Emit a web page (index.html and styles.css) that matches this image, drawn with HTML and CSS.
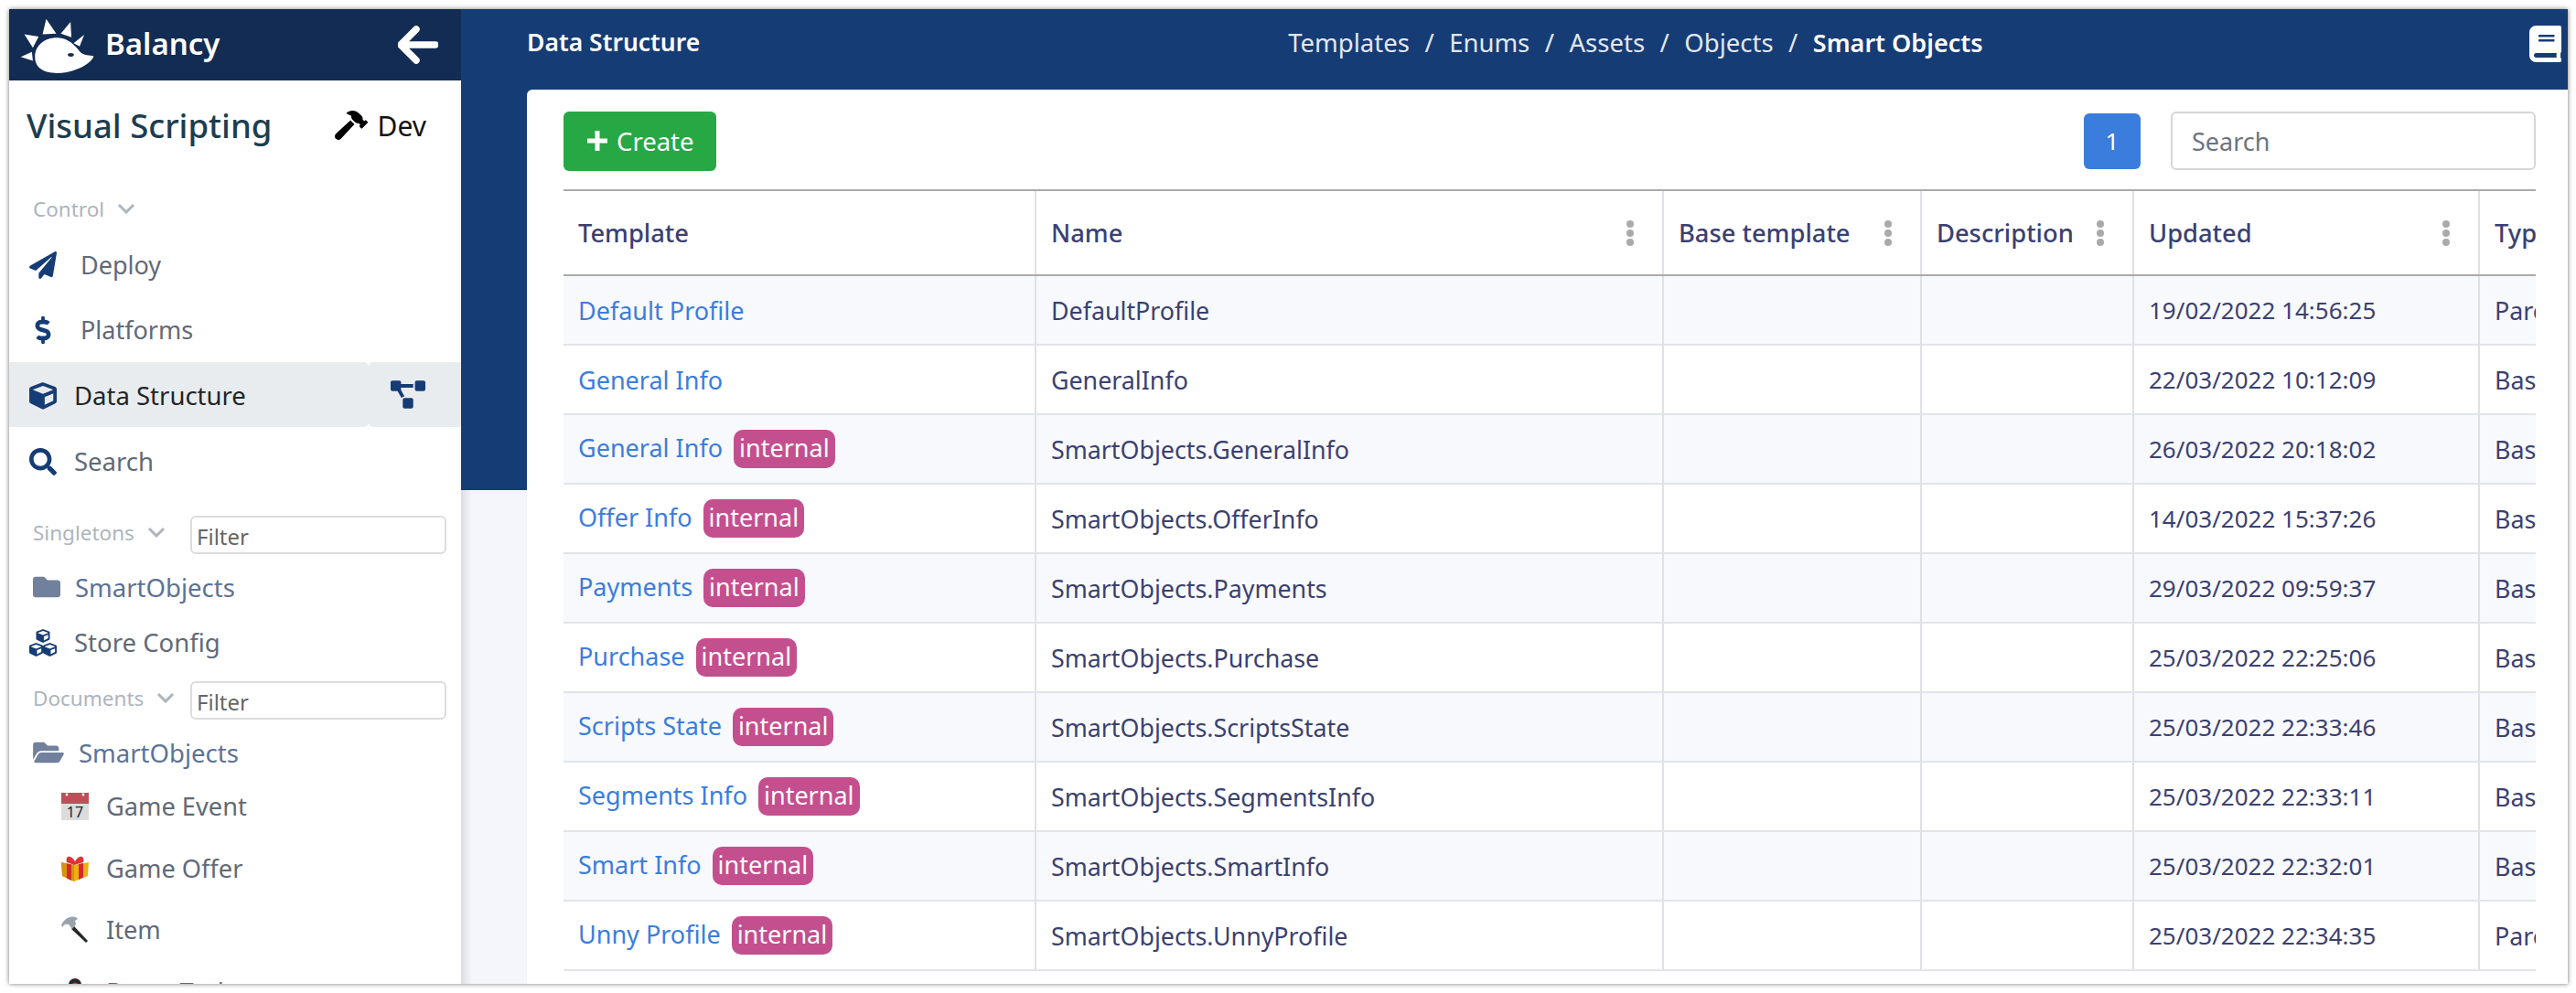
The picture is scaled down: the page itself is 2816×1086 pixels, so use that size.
FILE: index.html
```html
<!DOCTYPE html>
<html lang="en">
<head>
<meta charset="utf-8">
<title>Balancy - Smart Objects</title>
<link rel="stylesheet" href="styles.css">
</head>
<body>
<div class="window">
  <aside class="sidebar">
    <div class="brand">
      <svg class="logo" viewBox="0 0 280 210"><path fill="#fff" d="M110 70L122 20L155 68ZM170 68L202 30L205 80ZM212 100L247 72L232 110ZM50 70L97 78L78 115ZM38 145L75 128L78 158ZM85 145C85 105 120 80 160 82C195 84 215 105 235 130C245 140 265 140 278 142C275 160 240 185 190 195C130 205 85 190 85 145Z"/><ellipse cx="203" cy="138" rx="10" ry="6" fill="#132c54"/></svg>
      <span class="brand-name">Balancy</span>
      <svg class="back" viewBox="0 0 44 42"><path d="M20 4L3 21L20 38M4 21H41" fill="none" stroke="#fff" stroke-width="7.5" stroke-linecap="round" stroke-linejoin="round"/></svg>
    </div>
    <div class="title-row">
      <span class="title">Visual Scripting</span>
      <svg class="hammer" viewBox="0 0 576 512"><path d="M571.31 193.94l-22.63-22.63c-6.25-6.25-16.38-6.25-22.63 0l-11.31 11.31-28.9-28.9c5.63-21.31.36-44.9-16.35-61.61l-45.25-45.25c-62.48-62.48-163.79-62.48-226.28 0l90.51 45.25v18.75c0 16.97 6.74 33.25 18.75 45.25l49.14 49.14c16.71 16.71 40.3 21.98 61.61 16.35l28.9 28.9-11.31 11.31c-6.25 6.25-6.25 16.38 0 22.63l22.63 22.63c6.25 6.25 16.38 6.25 22.63 0l90.51-90.51c6.23-6.24 6.23-16.37-.02-22.62zm-286.72-15.2c-3.7-3.7-6.84-7.79-9.85-11.95L19.64 404.96c-25.57 23.88-26.26 64.19-1.53 88.93s65.05 24.05 88.93-1.53l238.13-255.07c-3.96-2.91-7.9-5.87-11.44-9.41l-49.14-49.14z"/></svg>
      <span class="env">Dev</span>
    </div>
    <div class="label label-control">Control <svg class="chev" viewBox="0 0 20 12"><path d="M2 2L10 10L18 2"/></svg></div>
    <div class="nav wide"><svg class="ic" viewBox="0 0 512 512"><path d="M476 3.2L12.5 270.6c-18.1 10.4-15.8 35.6 2.2 43.2L121 358.4l287.3-253.2c5.5-4.9 13.3 2.6 8.6 8.3L176 407v80.5c0 23.6 28.5 32.9 42.5 15.8L282 426l124.6 52.2c14.2 6 30.4-2.9 33-18.2l72-432C515 7.8 493.3-6.8 476 3.2z"/></svg><span>Deploy</span></div>
    <div class="nav wide"><svg class="ic" viewBox="-112 0 512 512"><path d="M209.2 233.4l-108-31.6C88.7 198.2 80 186.5 80 173.5c0-16.3 13.2-29.5 29.5-29.5h66.3c12.2 0 24.2 3.7 34.2 10.5 6.1 4.1 14.3 3.1 19.5-2l34.8-34c7.1-6.9 6.1-18.4-1.8-24.5C238 74.8 207.4 64.1 176 64V16c0-8.8-7.2-16-16-16h-32c-8.8 0-16 7.2-16 16v48h-2.5C45.8 64-5.4 118.7.5 183.6c4.2 46.1 39.4 83.6 83.8 96.6l102.5 30c12.5 3.7 21.2 15.3 21.2 28.3 0 16.3-13.2 29.5-29.5 29.5h-66.3C100 368 88 364.3 78 357.5c-6.1-4.1-14.3-3.1-19.5 2l-34.8 34c-7.1 6.9-6.1 18.4 1.8 24.5 24.5 19.2 55.1 29.9 86.5 30v48c0 8.8 7.2 16 16 16h32c8.8 0 16-7.2 16-16v-48.2c46.6-.9 90.3-28.6 105.7-72.7 21.5-61.6-14.6-124.8-72.5-141.7z"/></svg><span>Platforms</span></div>
    <div class="active-row">
      <div class="nav active"><svg class="ic" viewBox="0 0 512 512"><path d="M239.1 6.3l-208 78c-18.7 7-31.1 25-31.1 45v225.1c0 18.2 10.3 34.8 26.5 42.9l208 104c13.5 6.8 29.4 6.8 42.9 0l208-104c16.3-8.1 26.5-24.8 26.5-42.9V129.3c0-20-12.4-37.9-31.1-44.9l-208-78C262 2.2 250 2.2 239.1 6.3zM256 68.4l192 72v1.1l-192 78-192-78v-1.1l192-72zm32 356V275.5l160-65v133.9l-160 80z"/></svg><span>Data Structure</span></div>
      <div class="tree-btn"><svg class="tree" viewBox="0 0 640 512"><path d="M384 320H256c-17.67 0-32 14.33-32 32v128c0 17.67 14.33 32 32 32h128c17.67 0 32-14.33 32-32V352c0-17.67-14.33-32-32-32zM192 32c0-17.67-14.33-32-32-32H32C14.33 0 0 14.33 0 32v128c0 17.67 14.33 32 32 32h95.72l73.16 128.04C211.98 300.98 232.4 288 256 288h.28L192 175.51V128h224V64H192V32zM608 0H480c-17.67 0-32 14.33-32 32v128c0 17.67 14.33 32 32 32h128c17.67 0 32-14.33 32-32V32c0-17.67-14.33-32-32-32z"/></svg></div>
    </div>
    <div class="nav"><svg class="ic" viewBox="0 0 512 512"><path d="M505 442.7L405.3 343c-4.5-4.5-10.6-7-17-7H372c27.6-35.3 44-79.7 44-128C416 93.1 322.9 0 208 0S0 93.1 0 208s93.1 208 208 208c48.3 0 92.7-16.4 128-44v16.3c0 6.4 2.5 12.5 7 17l99.7 99.7c9.4 9.4 24.6 9.4 33.9 0l28.3-28.3c9.4-9.4 9.4-24.6.1-34zM208 336c-70.7 0-128-57.2-128-128 0-70.7 57.2-128 128-128 70.7 0 128 57.2 128 128 0 70.7-57.2 128-128 128z"/></svg><span>Search</span></div>
    <div class="filter-row singletons">
      <div class="label">Singletons <svg class="chev" viewBox="0 0 20 12"><path d="M2 2L10 10L18 2"/></svg></div>
      <input class="filter" placeholder="Filter">
    </div>
    <div class="nav folder"><svg class="ic-folder" viewBox="0 0 512 512"><path d="M464 128H272l-64-64H48C21.49 64 0 85.49 0 112v288c0 26.51 21.49 48 48 48h416c26.51 0 48-21.49 48-48V176c0-26.51-21.49-48-48-48z"/></svg><span>SmartObjects</span></div>
    <div class="nav store"><svg class="ic" viewBox="0 0 512 512"><g transform="translate(128 0) scale(.5)"><use href="#cube"/></g><g transform="translate(0 256) scale(.5)"><use href="#cube"/></g><g transform="translate(256 256) scale(.5)"><use href="#cube"/></g><defs><path id="cube" d="M239.1 6.3l-208 78c-18.7 7-31.1 25-31.1 45v225.1c0 18.2 10.3 34.8 26.5 42.9l208 104c13.5 6.8 29.4 6.8 42.9 0l208-104c16.3-8.1 26.5-24.8 26.5-42.9V129.3c0-20-12.4-37.9-31.1-44.9l-208-78C262 2.2 250 2.2 239.1 6.3zM256 68.4l192 72v1.1l-192 78-192-78v-1.1l192-72zm32 356V275.5l160-65v133.9l-160 80z"/></defs></svg><span>Store Config</span></div>
    <div class="filter-row documents">
      <div class="label">Documents <svg class="chev" viewBox="0 0 20 12"><path d="M2 2L10 10L18 2"/></svg></div>
      <input class="filter" placeholder="Filter">
    </div>
    <div class="nav folder open"><svg class="ic-open" viewBox="0 0 576 512"><path d="M572.694 292.093L500.27 416.248A63.997 63.997 0 0 1 444.989 448H45.025c-18.523 0-30.064-20.093-20.731-36.093l72.424-124.155A64 64 0 0 1 152 256h399.964c18.523 0 30.064 20.093 20.73 36.093zM152 224h328v-48c0-26.51-21.49-48-48-48H272l-64-64H48C21.49 64 0 85.49 0 112v278.046l69.077-118.418C86.214 242.25 117.989 224 152 224z"/></svg><span>SmartObjects</span></div>
    <div class="doc first">
      <svg class="emoji" viewBox="0 0 30 30"><rect y="0" width="30" height="30" fill="#dcdcdc"/><rect width="30" height="12" fill="#bb5058"/><circle cx="6" cy="2" r="1.4" fill="#fff"/><circle cx="24" cy="2" r="1.4" fill="#fff"/><text x="15" y="27" text-anchor="middle" class="emoji-num">17</text></svg>
      <span>Game Event</span>
    </div>
    <div class="doc">
      <svg class="emoji" viewBox="0 0 30 30"><path d="M0 9L14 12L30 9L29 24L14 30L1 24Z" fill="#eeaf12"/><path d="M0 9L14 12V30L1 24Z" fill="#d9930d"/><path d="M6 10.5L11 11.5V29L6 26.5ZM19 11L24 10V25.5L19 28Z" fill="#d3292c"/><path d="M15 8C10 0 4 2 6 9L14 12L24 9C26 2 20 0 15 8Z" fill="#e0343a"/></svg>
      <span>Game Offer</span>
    </div>
    <div class="doc">
      <svg class="emoji" viewBox="0 0 30 30"><path d="M14 11L29 27L27 29L11 14Z" fill="#24282c"/><path d="M0 10C3 3 9 -1 16 1L18 3L15 5L16 9L12 14L8 9C5 8 3 9 1 12Z" fill="#9aa3ab"/></svg>
      <span>Item</span>
    </div>
    <div class="doc">
      <svg class="emoji" viewBox="0 0 30 30"><circle cx="15" cy="8" r="7" fill="#26282c"/><circle cx="15" cy="9" r="3.5" fill="#e0343a"/></svg>
      <span>Boost Tasks</span>
    </div>
  </aside>
  <main class="main">
    <header class="topbar">
      <span class="page-title">Data Structure</span>
      <nav class="crumbs">
        <a>Templates</a><i>/</i><a>Enums</a><i>/</i><a>Assets</a><i>/</i><a>Objects</a><i>/</i><b>Smart Objects</b>
      </nav>
      <svg class="book" viewBox="0 0 448 512"><path fill="#fff" d="M448 360V24c0-13.3-10.7-24-24-24H96C43 0 0 43 0 96v320c0 53 43 96 96 96h328c13.3 0 24-10.7 24-24v-16c0-7.5-3.5-14.3-8.9-18.7-4.2-15.4-4.2-59.3 0-74.7 5.4-4.3 8.9-11.1 8.9-18.6zM128 134c0-3.3 2.7-6 6-6h212c3.3 0 6 2.7 6 6v20c0 3.3-2.7 6-6 6H134c-3.3 0-6-2.7-6-6v-20zm0 64c0-3.3 2.7-6 6-6h212c3.3 0 6 2.7 6 6v20c0 3.3-2.7 6-6 6H134c-3.3 0-6-2.7-6-6v-20zm253.4 250H96c-17.7 0-32-14.3-32-32 0-17.6 14.4-32 32-32h285.4c-1.9 17.1-1.9 46.9 0 64z"/></svg>
    </header>
    <section class="card">
      <div class="toolbar">
        <button class="create"><svg class="plus" viewBox="0 0 26 26"><path d="M13 2V24M2 13H24"/></svg>Create</button>
        <span class="page-num">1</span>
        <input class="search" placeholder="Search">
      </div>
      <div class="table-wrap">
        <table>
          <colgroup><col class="c1"><col class="c2"><col class="c3"><col class="c4"><col class="c5"><col class="c6"></colgroup>
          <thead>
            <tr>
              <th>Template</th>
              <th><div class="th">Name<span class="kebab"><i></i><i></i><i></i></span></div></th>
              <th><div class="th">Base template<span class="kebab"><i></i><i></i><i></i></span></div></th>
              <th><div class="th">Description<span class="kebab"><i></i><i></i><i></i></span></div></th>
              <th><div class="th">Updated<span class="kebab"><i></i><i></i><i></i></span></div></th>
              <th>Type</th>
            </tr>
          </thead>
          <tbody>
            <tr><td><a>Default Profile</a></td><td>DefaultProfile</td><td></td><td></td><td class="date">19/02/2022 14:56:25</td><td>Parent</td></tr>
            <tr><td><a>General Info</a></td><td>GeneralInfo</td><td></td><td></td><td class="date">22/03/2022 10:12:09</td><td>Base</td></tr>
            <tr><td><a>General Info</a><span class="badge">internal</span></td><td>SmartObjects.GeneralInfo</td><td></td><td></td><td class="date">26/03/2022 20:18:02</td><td>Base</td></tr>
            <tr><td><a>Offer Info</a><span class="badge">internal</span></td><td>SmartObjects.OfferInfo</td><td></td><td></td><td class="date">14/03/2022 15:37:26</td><td>Base</td></tr>
            <tr><td><a>Payments</a><span class="badge">internal</span></td><td>SmartObjects.Payments</td><td></td><td></td><td class="date">29/03/2022 09:59:37</td><td>Base</td></tr>
            <tr><td><a>Purchase</a><span class="badge">internal</span></td><td>SmartObjects.Purchase</td><td></td><td></td><td class="date">25/03/2022 22:25:06</td><td>Base</td></tr>
            <tr><td><a>Scripts State</a><span class="badge">internal</span></td><td>SmartObjects.ScriptsState</td><td></td><td></td><td class="date">25/03/2022 22:33:46</td><td>Base</td></tr>
            <tr><td><a>Segments Info</a><span class="badge">internal</span></td><td>SmartObjects.SegmentsInfo</td><td></td><td></td><td class="date">25/03/2022 22:33:11</td><td>Base</td></tr>
            <tr><td><a>Smart Info</a><span class="badge">internal</span></td><td>SmartObjects.SmartInfo</td><td></td><td></td><td class="date">25/03/2022 22:32:01</td><td>Base</td></tr>
            <tr><td><a>Unny Profile</a><span class="badge">internal</span></td><td>SmartObjects.UnnyProfile</td><td></td><td></td><td class="date">25/03/2022 22:34:35</td><td>Parent</td></tr>
          </tbody>
        </table>
      </div>
    </section>
  </main>
</div>
</body>
</html>
```
FILE: styles.css
```css
* { box-sizing: border-box; }
html, body { margin: 0; height: 100%; background: #fff; overflow: hidden; }
body { padding: 10px 9px 10px 10px; font-family: "Noto Sans", sans-serif; font-size: 26.8px; color: #3a4170; }

.window { display: flex; width: 2797px; height: 1066px; overflow: hidden; box-shadow: 0 0 5px rgba(0,0,0,.55); }

.sidebar { flex: 0 0 494px; background: #fff; overflow: hidden; }
.brand { display: flex; align-items: center; height: 78px; background: #132c54; color: #fff; }
.logo { width: 93px; height: 70px; flex: none; margin-right: 12px; }
.brand-name { font-size: 33px; font-weight: 600; margin-top: -3px; }
.back { width: 44px; height: 42px; margin-left: auto; margin-right: 25px; }

.title-row { display: flex; align-items: center; height: 104px; padding: 0 38px 6px 19px; }
.title { font-size: 36.5px; font-weight: 500; color: #1c3d50; }
.hammer { width: 36px; height: 32px; margin-left: auto; margin-right: 11px; }
.env { font-size: 30px; color: #111; }

.label { font-size: 22.5px; color: #adb5bd; display: flex; align-items: center; white-space: nowrap; }
.label-control { height: 62px; padding: 10px 0 0 26px; }
.chev { width: 20px; height: 12px; margin-left: 14px; fill: none; stroke: #adb5bd; stroke-width: 3; }

.nav { display: flex; align-items: center; height: 71px; padding-left: 22px; font-size: 27.5px; color: #606a77; }
.nav span { margin-left: 19px; }
.nav.wide span { margin-left: 26px; }
.nav.wide { font-size: 27px; }
.ic { width: 30px; height: 30px; fill: #163c75; flex: none; }

.active-row { display: flex; height: 71px; margin-bottom: 2px; }
.nav.active { flex: 0 0 393px; height: 71px; padding-top: 2px; background: #e9ecef; border-radius: 0 5px 5px 0; color: #212529; }
.tree-btn { flex: 1; display: flex; align-items: center; justify-content: center; padding-right: 16px; background: #e9ecef; border-radius: 5px 0 0 5px; }
.tree { width: 38px; height: 31px; fill: #163c75; }

.filter-row { display: flex; align-items: center; justify-content: space-between; height: 42px; padding: 0 16px 0 26px; }
.filter-row .label { padding-bottom: 6px; }
.singletons { margin-top: 24px; }
.filter { width: 280px; height: 42px; padding: 3px 0 0 5px; border: 2px solid #dcdcdc; border-radius: 6px; font: 24px "Noto Sans", sans-serif; outline: none; }
.filter::placeholder { color: #666; opacity: 1; }

.folder { padding-left: 26px; color: #5c7295; height: 72px; }
.ic-folder { width: 30px; height: 30px; fill: #71819d; flex: none; }
.ic-open { width: 34px; height: 30px; fill: #71819d; flex: none; }
.folder span { margin-left: 16px; }
.store { height: 52px; padding-bottom: 3px; }
.documents { margin-top: 15px; }
.open { height: 72px; }

.doc { display: flex; align-items: center; height: 67.5px; padding-left: 57px; font-size: 27.2px; color: #606a77; }
.doc.first { margin-top: -11px; }
.doc span { margin-left: 19px; }
.emoji { width: 30px; height: 30px; flex: none; }
.emoji-num { font-size: 16px; fill: #222; font-family: "Noto Sans", sans-serif; }

.main { flex: 1; min-width: 0; display: flex; flex-direction: column; background: linear-gradient(#163c75, #163c75) 0 0 / 100% 526px no-repeat, linear-gradient(to right, #dcdee6, #f4f6fb 12px); }

.topbar { display: flex; align-items: center; height: 88px; padding: 0 7px 16px 72px; color: #fff; flex: none; }
.page-title { font-size: 26.5px; font-weight: 600; }
.crumbs { display: flex; align-items: center; margin-left: 643px; color: #e3e8f1; font-size: 27.5px; }
.crumbs i { font-style: normal; margin: 0 16.5px; }
.crumbs b { font-size: 27px; font-weight: 600; color: #fff; }
.book { width: 35px; height: 40px; margin-left: auto; margin-top: 3px; }

.card { flex: 1; margin-left: 72px; padding: 24px 35px 0 40px; background: #fff; border-radius: 6px 0 0 0; min-height: 0; }
.toolbar { display: flex; align-items: center; height: 64px; margin-bottom: 21px; }
.create { display: flex; align-items: center; gap: 8px; height: 65px; padding: 0 24px; background: #28a745; border: 0; border-radius: 6px; color: #fff; font: 27.5px "Noto Sans", sans-serif; }
.plus { width: 26px; height: 26px; fill: none; stroke: #fff; stroke-width: 5; }
.page-num { display: flex; align-items: center; justify-content: center; width: 62px; height: 61px; margin-left: auto; background: #3b7ddd; border-radius: 6px; color: #fff; font-size: 26px; }
.search { width: 399px; height: 64px; margin-left: 33px; padding: 0 21px; border: 2px solid #d6d6d6; border-radius: 6px; font: 27px "Noto Sans", sans-serif; outline: none; }
.search::placeholder { color: #6c757d; opacity: 1; }

.table-wrap { overflow: hidden; }
table { table-layout: fixed; width: 2356px; border-collapse: collapse; }
.c1 { width: 516px; } .c2 { width: 686px; } .c3 { width: 282px; } .c4 { width: 232px; } .c5 { width: 378px; } .c6 { width: 262px; }
th, td { padding: 0 16px; text-align: left; white-space: nowrap; border-left: 2px solid #dfe1e6; }
th:first-child, td:first-child { border-left: 0; }
th { height: 93px; font-size: 27.3px; font-weight: 500; border-top: 2px solid #aaa; border-bottom: 2px solid #aaa; }
td { height: 76px; border-bottom: 2px solid #e2e4ea; }
td.date { font-size: 26px; }
tbody tr:nth-child(odd) td { background: #f8f9fc; }
td a { font-size: 27px; color: #3b7ddd; }
.th { display: flex; align-items: center; justify-content: space-between; padding-right: 15px; }
.kebab { display: flex; flex-direction: column; gap: 2px; }
.kebab i { width: 8px; height: 8px; background: #aaa; border-radius: 50%; }
.badge { display: inline-block; margin-left: 12px; padding: 0 6px; height: 42px; line-height: 40px; font-size: 27px; background: #c44f8e; border-radius: 10px; color: #fff; }
```
